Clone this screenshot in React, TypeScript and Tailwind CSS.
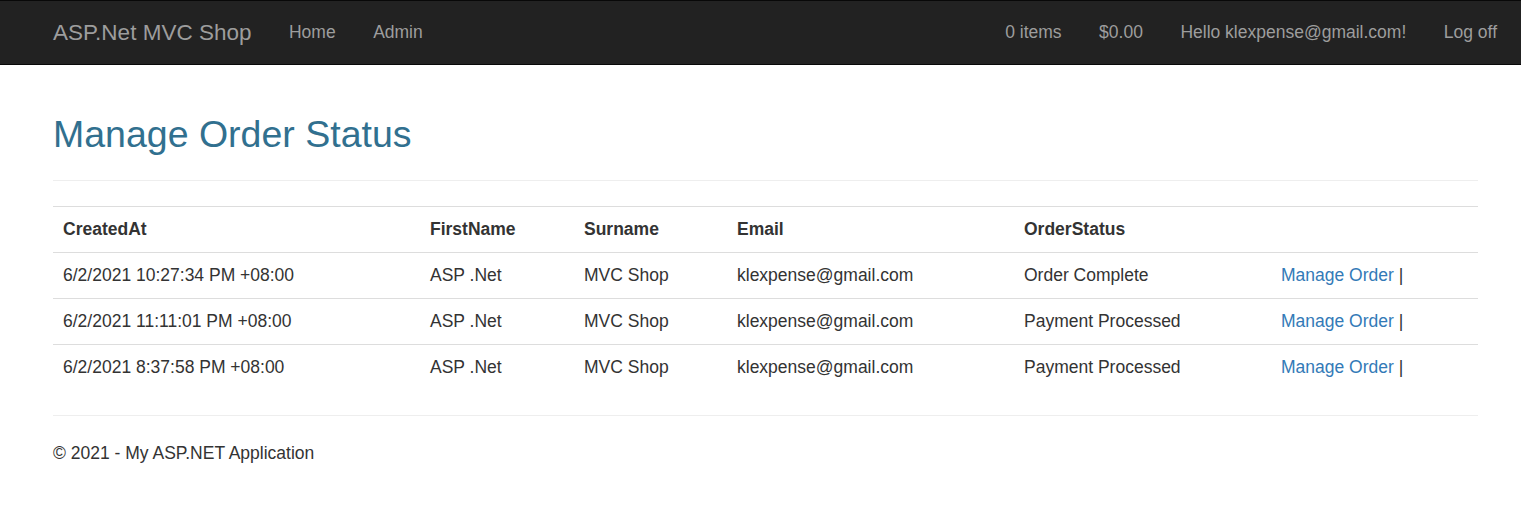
import React from "react";

const rows = [
  { at: "6/2/2021 10:27:34 PM +08:00", status: "Order Complete" },
  { at: "6/2/2021 11:11:01 PM +08:00", status: "Payment Processed" },
  { at: "6/2/2021 8:37:58 PM +08:00", status: "Payment Processed" },
];

export default function App() {
  return (
    <div
      className="min-h-[523px] bg-white text-[#333] text-[17.5px] leading-[25px]"
      style={{ fontFamily: '"Liberation Sans", Arial, sans-serif' }}
    >
      <nav className="h-[65px] bg-[#222] border-y border-[#080808] flex items-center justify-between pl-[53px] pr-[24px] text-[#9d9d9d]">
        <div className="flex items-center">
          <a className="text-[22.5px] leading-[25px] pr-[18.75px]">ASP.Net MVC Shop</a>
          <a className="px-[18.75px]">Home</a>
          <a className="px-[18.75px]">Admin</a>
        </div>
        <div className="flex items-center">
          <a className="px-[18.75px]">0 items</a>
          <a className="px-[18.75px]">$0.00</a>
          <a className="px-[18.75px]">Hello klexpense@gmail.com!</a>
          <a className="pl-[18.75px]">Log off</a>
        </div>
      </nav>

      <div className="ml-[53px] w-[1425px]">
        <div className="pt-[49px] pb-[25px] border-b border-[#eee]">
          <h2 className="text-[37.5px] leading-[41px] text-[#31708f]">Manage Order Status</h2>
        </div>

        <table className="mt-[25px] w-full table-fixed border-collapse">
          <colgroup>
            <col className="w-[367px]" />
            <col className="w-[154px]" />
            <col className="w-[153px]" />
            <col className="w-[287px]" />
            <col className="w-[257px]" />
            <col className="w-[207px]" />
          </colgroup>
          <thead>
            <tr className="border-t border-[#ddd]">
              <th className="text-left font-bold px-[10px] py-[10px]">CreatedAt</th>
              <th className="text-left font-bold px-[10px] py-[10px]">FirstName</th>
              <th className="text-left font-bold px-[10px] py-[10px]">Surname</th>
              <th className="text-left font-bold px-[10px] py-[10px]">Email</th>
              <th className="text-left font-bold px-[10px] py-[10px]">OrderStatus</th>
              <th className="px-[10px] py-[10px]"></th>
            </tr>
          </thead>
          <tbody>
            {rows.map((r, i) => (
              <tr key={i} className="border-t border-[#ddd]">
                <td className="px-[10px] py-[10px]">{r.at}</td>
                <td className="px-[10px] py-[10px]">ASP .Net</td>
                <td className="px-[10px] py-[10px]">MVC Shop</td>
                <td className="px-[10px] py-[10px]">klexpense@gmail.com</td>
                <td className="px-[10px] py-[10px]">{r.status}</td>
                <td className="px-[10px] py-[10px]">
                  <a className="text-[#337ab7]">Manage Order</a> |
                </td>
              </tr>
            ))}
          </tbody>
        </table>

        <div className="mt-[25px] border-t border-[#eee]" />
        <footer className="pt-[25px]">
          <p>© 2021 - My ASP.NET Application</p>
        </footer>
      </div>
    </div>
  );
}
